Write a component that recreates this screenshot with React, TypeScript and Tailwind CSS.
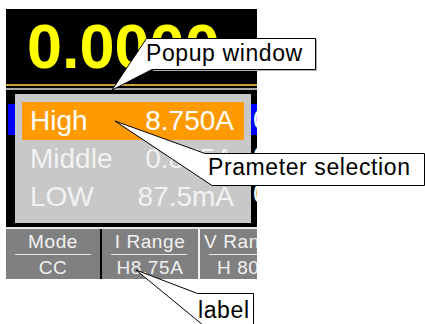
const screenRows = [
  { bg: 'bg-[#0000ff]', mt: 'mt-[14px]' },
  { bg: 'bg-black', mt: 'mt-[6px]' },
  { bg: 'bg-black', mt: 'mt-[6px]' },
]

const ranges = [
  { name: 'High', value: '8.750A', active: true },
  { name: 'Middle', value: '0.875A', active: false },
  { name: 'LOW', value: '87.5mA', active: false },
]

export default function App() {
  return (
    <div className="relative w-[425px] h-[324px] overflow-hidden bg-white font-['Liberation_Sans',Arial,sans-serif]">
      {/* instrument screen */}
      <div className="pl-[6px] pt-[9px]">
        <div className="w-[251px] h-[218px] bg-black overflow-hidden flex flex-col">
          <div className="h-[75px] pl-[21px] pt-[6px]">
            <span className="block text-[63px] font-bold leading-none text-[#ffff00] whitespace-nowrap">0.0000</span>
          </div>
          <div className="h-[2px] bg-[#c8a036]" />
          <div className="h-[2px] mt-[2px] bg-[#a8a8a8]" />
          {screenRows.map((r, i) => (
            <div key={i} className={`${r.mt} ${r.bg} ml-[2px] h-[31px] pl-[245px] flex items-center`}>
              <span className="text-[28px] leading-none text-white whitespace-nowrap">0.000</span>
            </div>
          ))}
        </div>

        {/* function tabs */}
        <div className="w-[251px] h-[52px] border-t-2 border-[#e6e6e6] bg-[#808080] flex overflow-hidden text-[19px] tracking-[0.6px] text-[#f2f2f2] leading-none whitespace-nowrap">
          <div className="w-[94px] shrink-0 flex flex-col">
            <div className="h-[25px] flex items-center justify-center">Mode</div>
            <div className="h-px mx-[9px] bg-[#e6e6e6]" />
            <div className="h-[24px] flex items-center justify-center">CC</div>
          </div>
          <div className="w-[98px] shrink-0 border-l-2 border-black flex flex-col">
            <div className="h-[25px] flex items-center justify-center">I Range</div>
            <div className="h-px ml-[9px] mr-[11px] bg-[#e6e6e6]" />
            <div className="h-[24px] flex items-center justify-center">H8.75A</div>
          </div>
          <div className="w-[98px] shrink-0 border-l-2 border-[#f2f2f2] flex flex-col">
            <div className="h-[25px] flex items-center pl-[4px]">V Range</div>
            <div className="h-px ml-[9px] bg-[#e6e6e6]" />
            <div className="h-[24px] flex items-center pl-[17px]">H 800V</div>
          </div>
        </div>
      </div>

      {/* popup window */}
      <div className="absolute left-[15px] top-[94px] w-[236px] h-[129px] bg-[#c8c8c8] pt-[8px] px-[7px]">
        {ranges.map(r => (
          <div
            key={r.name}
            className={`h-[38px] flex items-center justify-between pl-[8px] pr-[10px] text-[28px] leading-none ${r.active ? 'bg-[#ff9a00] text-white' : 'text-[#f2f2f2]'}`}
          >
            <span>{r.name}</span>
            <span>{r.value}</span>
          </div>
        ))}
      </div>

      {/* callouts */}
      <svg className="absolute inset-0 pointer-events-none" width="425" height="324" viewBox="0 0 425 324">
        <polyline points="316.5,39 316.5,70.5 153,70.5" fill="none" stroke="#b0b0b0" strokeWidth="1" />
        <polygon points="146.5,38.5 315.5,38.5 315.5,69.5 152,69.5 112,90" fill="#fff" stroke="#000" strokeWidth="1" strokeLinejoin="miter" />
        <polygon points="115,121 205,153.5 424.5,153.5 424.5,185.5 212,185.5" fill="#fff" stroke="#000" strokeWidth="1" />
        <polygon points="136,270 197.5,293.5 253.5,293.5 253.5,330 209,330" fill="#fff" stroke="#000" strokeWidth="1" />
      </svg>
      <div className="absolute left-[146px] top-[42px] text-[23px] leading-none tracking-[0.6px] text-black whitespace-nowrap">Popup window</div>
      <div className="absolute left-[208px] top-[156px] text-[23px] leading-none tracking-[0.6px] text-black whitespace-nowrap">Prameter selection</div>
      <div className="absolute left-[198px] top-[299px] text-[23px] leading-none tracking-[0.6px] text-black whitespace-nowrap">label</div>
    </div>
  )
}
